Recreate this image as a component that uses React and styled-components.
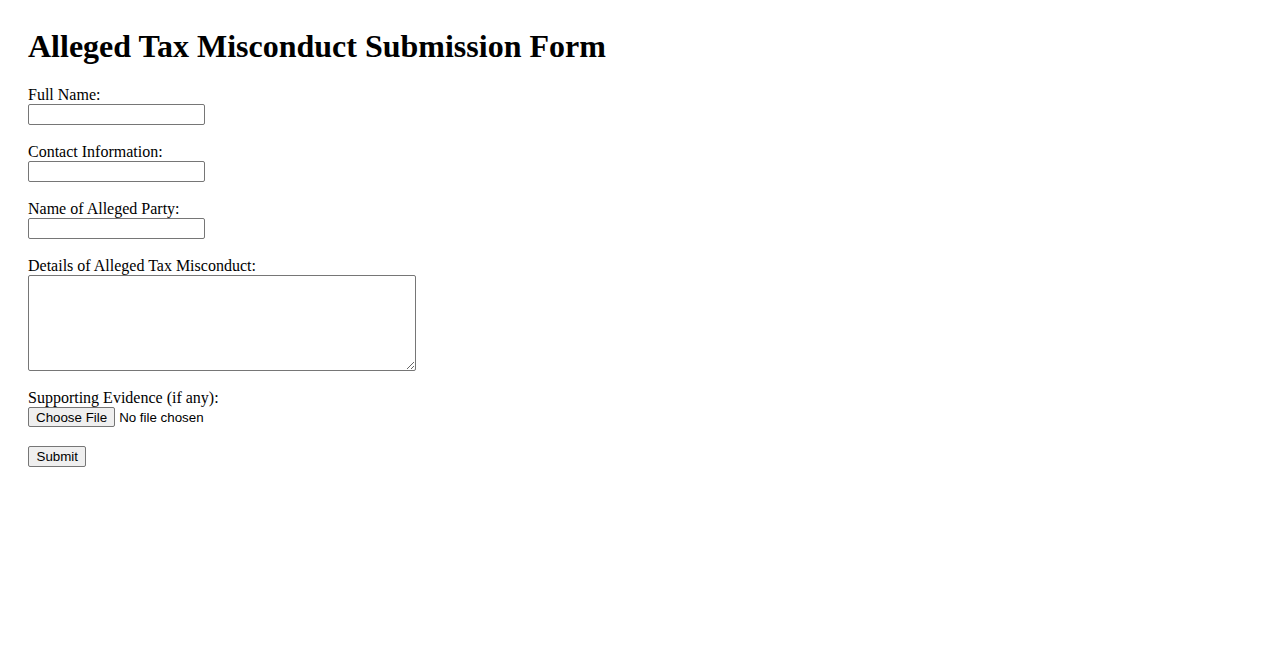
import styled, { createGlobalStyle } from "styled-components";

const GlobalStyle = createGlobalStyle`
    html, body {
        margin: 0;
        padding: 0;
        background: #fff;
    }
    body {
        font-family: "Liberation Serif", "Times New Roman", serif;
        font-size: 16px;
        color: #000;
    }
`;

const Page = styled.main`
    padding: 28px;
`;

const Title = styled.h1`
    margin: 0 0 21px;
    font-size: 32px;
    font-weight: bold;
    line-height: 37px;
`;

const Form = styled.form`
    display: flex;
    flex-direction: column;
    align-items: flex-start;
`;

const Field = styled.div`
    display: flex;
    flex-direction: column;
    align-items: flex-start;
    margin-bottom: 18px;
`;

const Label = styled.label`
    line-height: 18px;
`;

const TextInput = styled.input`
    box-sizing: border-box;
    width: 177px;
    height: 21px;
    margin: 0;
    padding: 1px 2px;
    border: 1px solid #767676;
    border-radius: 2px;
    font-family: "Liberation Sans", Arial, sans-serif;
    font-size: 13.33px;
`;

const TextArea = styled.textarea`
    box-sizing: border-box;
    width: 388px;
    height: 96px;
    margin: 0;
    padding: 2px;
    border: 1px solid #767676;
    border-radius: 2px;
    font-family: "Liberation Mono", monospace;
    font-size: 13.33px;
`;

const FileInput = styled.input`
    margin: 0 0 1px;
    font-family: "Liberation Sans", Arial, sans-serif;
    font-size: 13.33px;

    &::file-selector-button {
        font-family: "Liberation Sans", Arial, sans-serif;
        font-size: 13.33px;
        height: 20px;
        padding: 1px 7px;
        margin-right: 4px;
        background: #efefef;
        border: 1px solid #767676;
        border-radius: 2px;
        color: #000;
    }
`;

const SubmitButton = styled.button`
    box-sizing: border-box;
    height: 21px;
    margin: 0;
    padding: 1px 7.5px;
    background: #efefef;
    border: 1px solid #767676;
    border-radius: 2px;
    font-family: "Liberation Sans", Arial, sans-serif;
    font-size: 13.33px;
    color: #000;
`;

const App = () => {
    return (
        <>
            <GlobalStyle />
            <Page>
                <Title>Alleged Tax Misconduct Submission Form</Title>
                <Form onSubmit={(e) => e.preventDefault()}>
                    <Field>
                        <Label htmlFor="fullName">Full Name:</Label>
                        <TextInput id="fullName" type="text" />
                    </Field>
                    <Field>
                        <Label htmlFor="contact">Contact Information:</Label>
                        <TextInput id="contact" type="text" />
                    </Field>
                    <Field>
                        <Label htmlFor="party">Name of Alleged Party:</Label>
                        <TextInput id="party" type="text" />
                    </Field>
                    <Field>
                        <Label htmlFor="details">Details of Alleged Tax Misconduct:</Label>
                        <TextArea id="details" />
                    </Field>
                    <Field>
                        <Label htmlFor="evidence">Supporting Evidence (if any):</Label>
                        <FileInput id="evidence" type="file" />
                    </Field>
                    <SubmitButton type="submit">Submit</SubmitButton>
                </Form>
            </Page>
        </>
    );
};

export default App;
